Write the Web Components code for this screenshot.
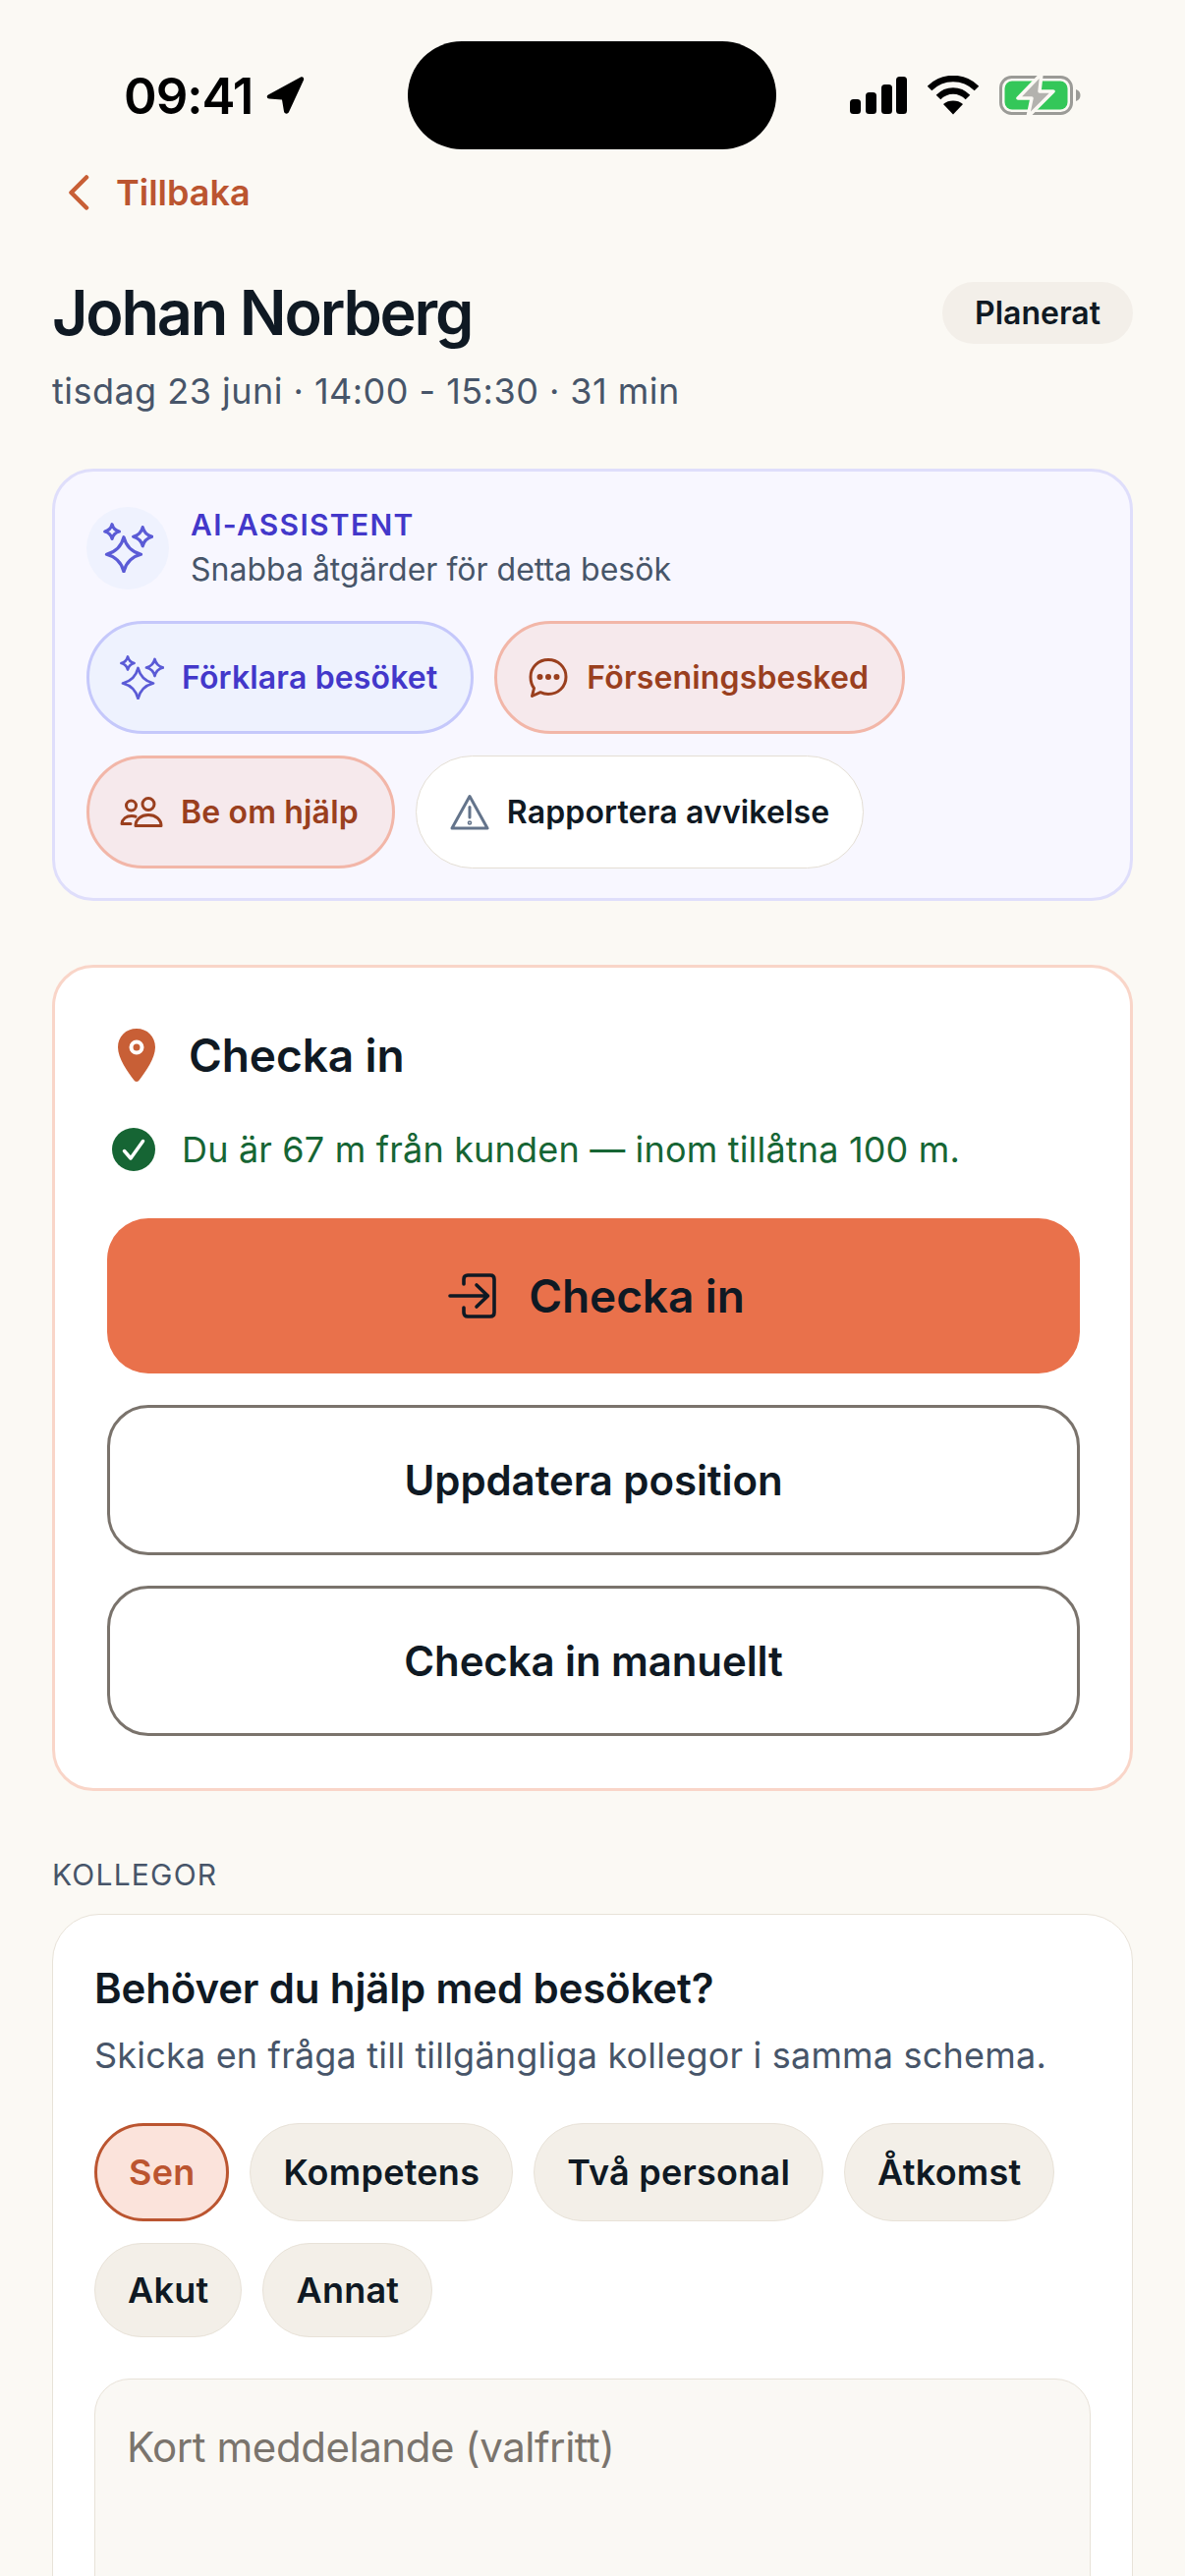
<!DOCTYPE html>
<html lang="sv"><head><meta charset="utf-8"><title>Besök</title>
<style>
html,body{margin:0;padding:0;background:#fbf9f4;font-family:Inter,"Noto Sans",sans-serif;color:#0f1923;-webkit-font-smoothing:antialiased}
body{height:2622px;overflow:hidden}
</style></head><body>
<visit-page>
  <status-bar></status-bar>
  <back-link>Tillbaka</back-link>
  <visit-header name="Johan Norberg" status="Planerat">tisdag 23 juni · 14:00 - 15:30 · 31 min</visit-header>
  <ai-card>
    <action-pill kind="ai" icon="spark">Förklara besöket</action-pill>
    <action-pill kind="warm" icon="chat">Förseningsbesked</action-pill>
    <action-pill kind="warm" icon="people">Be om hjälp</action-pill>
    <action-pill kind="plain" icon="warn">Rapportera avvikelse</action-pill>
  </ai-card>
  <checkin-card>
    <big-button kind="primary" icon="login">Checka in</big-button>
    <big-button>Uppdatera position</big-button>
    <big-button>Checka in manuellt</big-button>
  </checkin-card>
  <colleague-section>
    <reason-chip selected>Sen</reason-chip>
    <reason-chip>Kompetens</reason-chip>
    <reason-chip>Två personal</reason-chip>
    <reason-chip>Åtkomst</reason-chip>
    <reason-chip>Akut</reason-chip>
    <reason-chip>Annat</reason-chip>
  </colleague-section>
</visit-page>
<script>
function star(cx,cy,r){const k=.2*r;return `M${cx} ${cy-r}Q${cx+k} ${cy-k} ${cx+r} ${cy}Q${cx+k} ${cy+k} ${cx} ${cy+r}Q${cx-k} ${cy+k} ${cx-r} ${cy}Q${cx-k} ${cy-k} ${cx} ${cy-r}Z`}
const sparkPath=star(18.5,28.5,15.5)+star(8,8,6.5)+star(35.5,12.5,8.5);
const ICONS={
 spark:`<svg width="45" height="45" viewBox="0 0 45 45" fill="none" stroke="#5b5bd6" stroke-width="2.8" stroke-linejoin="round"><path d="${sparkPath}"/></svg>`,
 chat:`<svg width="42" height="42" viewBox="0 0 42 42" fill="none" stroke="currentColor" stroke-width="3" stroke-linejoin="round" stroke-linecap="round"><path d="M21 2.500C31 2.500 39 10 39 20S31 37.500 21 37.500c-3 0-5.500-.6-8-1.800L4.500 39.500l2-8C4.200 28.500 3 24.500 3 20 3 10 11 2.500 21 2.500Z"/><circle cx="12.500" cy="20" r="1.500" fill="currentColor"/><circle cx="21" cy="20" r="1.500" fill="currentColor"/><circle cx="29.500" cy="20" r="1.500" fill="currentColor"/></svg>`,
 people:`<svg width="44" height="31" viewBox="0 0 44 31" fill="none" stroke="currentColor" stroke-width="3" stroke-linecap="round" stroke-linejoin="round"><circle cx="11.500" cy="9" r="5"/><circle cx="29" cy="7.500" r="6"/><path d="M16 29.500H42C42 23 36.500 18.500 29 18.500S16 23 16 29.500Z"/><path d="M2 27.500C2.500 22.500 6.500 19.500 12 19.500c1.500 0 3 .2 4 .7M2 27.500H11"/></svg>`,
 warn:`<svg width="40" height="38" viewBox="0 0 40 38" fill="none" stroke="#64748b" stroke-width="3" stroke-linejoin="round" stroke-linecap="round"><path d="M20 2.500 38 35H2Z"/><path d="M20 13.500V24"/><circle cx="20" cy="29.500" r=".8"/></svg>`,
 login:`<svg width="49" height="46" viewBox="0 0 49 46" fill="none" stroke="currentColor" stroke-width="3.600" stroke-linecap="round" stroke-linejoin="round"><path d="M16 11V6Q16 2 20 2H43Q47 2 47 6V40Q47 44 43 44H20Q16 44 16 40V35"/><path d="M2 23H40M29 12 40.500 23 29 34"/></svg>`
};

function define(name,css,html,extra){
  const t=document.createElement('template');
  t.innerHTML=`<style>${css}</style>${html}`;
  customElements.define(name,class extends HTMLElement{
    constructor(){super();this.attachShadow({mode:'open'}).appendChild(t.content.cloneNode(true));}
    connectedCallback(){ if(extra) extra(this,this.shadowRoot); }
  });
}

define('visit-page',`:host{display:block;padding:0 53px}`,`<slot></slot>`);

define('status-bar',`
:host{display:grid;grid-template-columns:415px 375px 1fr;margin:0 -53px;padding-top:42px;height:110px;align-items:center;color:#000}
.l{display:flex;align-items:center;gap:14px;font-size:51px;font-weight:600;line-height:1;letter-spacing:-1px;padding-left:126px}
.island{height:110px;background:#000;border-radius:55px;grid-column:2}
.r{display:flex;align-items:center;padding-left:75px;gap:21px}
`,`<div class="l"><span>09:41</span><svg width="40" height="40" viewBox="0 0 40 40"><path d="M2 19.500 35 1.500C37 .5 39 2.500 38 4.500L23 37C21.800 39.500 18.500 39 18 36.500L16 24.500 3 23.500C.5 23.200 0 20.700 2 19.500Z" fill="#000"/></svg></div>
<div class="island"></div>
<div class="r">
<svg width="58" height="38" viewBox="0 0 58 38" fill="#000"><rect x="0" y="23" width="11" height="15" rx="3.500"/><rect x="16" y="16" width="11" height="22" rx="3.500"/><rect x="32" y="8" width="11" height="30" rx="3.500"/><rect x="47" y="0" width="11" height="38" rx="3.500"/></svg>
<svg width="52" height="40" viewBox="0 0 52 40"><path d="M2 13C8 7 16 3 26 3s18 4 24 10" fill="none" stroke="#000" stroke-width="6.500" stroke-linecap="butt"/><path d="M11 22c4-4 9-6.500 15-6.500S37 18 41 22" fill="none" stroke="#000" stroke-width="6.500"/><path d="M16 29c3-2.500 6-3.500 10-3.500s7 1 10 3.500L26 39.500Z" fill="#000"/></svg>
<svg width="84" height="44" viewBox="0 0 84 44"><rect x="1.500" y="3.500" width="72" height="37" rx="11" fill="none" stroke="#9b9b97" stroke-width="3"/><path d="M78 16c3 1 4.500 3 4.500 6s-1.500 5-4.500 6Z" fill="#9b9b97"/><rect x="5.500" y="7.500" width="64" height="29" rx="7.500" fill="#34c759"/><path d="M43 0 19 25H33L29 44 55 18H41Z" fill="#b3b2ae" stroke="#fbf9f4" stroke-width="3.500" stroke-linejoin="round"/></svg>
</div>`);

define('back-link',`
:host{display:flex;align-items:center;gap:27px;margin:22px 0 0 16px;height:44px;color:#bb5530;font-size:36px;font-weight:600;line-height:44px}
svg{flex:none}
`,`<svg width="22" height="36" viewBox="0 0 22 36" fill="none" stroke="#c85f36" stroke-width="4.500" stroke-linecap="round" stroke-linejoin="round"><path d="M19 2.500 3.500 18 19 33.500"/></svg><slot></slot>`);

define('visit-header',`
:host{display:block;margin-top:64px}
.top{display:flex;justify-content:space-between;align-items:center}
h1{margin:0;font-size:63px;font-weight:600;line-height:72px;letter-spacing:-2.200px;color:#0f1923}
.badge{display:flex;align-items:center;height:63px;padding:0 33px;border-radius:32px;background:#f3efe9;font-size:32px;font-weight:600;color:#0f1923}
.sub{margin-top:22px;font-size:36px;line-height:44px;letter-spacing:.47px;color:#475569}
`,`<div class="top"><h1 id="n"></h1><div class="badge" id="s"></div></div><div class="sub"><slot></slot></div>`,
(h,s)=>{s.getElementById('n').textContent=h.getAttribute('name');s.getElementById('s').textContent=h.getAttribute('status');});

define('ai-card',`
:host{display:block;margin-top:57px;border:3px solid #dfdefb;border-radius:42px;background:#f8f7ff;padding:35px 30px 30px 32px}
.head{display:flex;align-items:center;gap:22px}
.ic{width:84px;height:84px;border-radius:50%;background:#eff2fe;display:flex;align-items:center;justify-content:center}
.t{font-size:30px;font-weight:600;line-height:38px;letter-spacing:1.300px;color:#4338ca}
.d{font-size:32px;line-height:40px;color:#475569;margin-top:7px}
.acts{display:flex;flex-wrap:wrap;gap:22px 21px;margin-top:32px}
`,`<div class="head"><div class="ic"><svg width="51" height="51" viewBox="0 0 45 45" fill="none" stroke="#5b5bd6" stroke-width="2.800" stroke-linejoin="round"><path d="${sparkPath}"/></svg></div><div><div class="t">AI-ASSISTENT</div><div class="d">Snabba åtgärder för detta besök</div></div></div><div class="acts"><slot></slot></div>`);

define('action-pill',`
:host{display:inline-flex;align-items:center;height:115px;box-sizing:border-box;border-radius:58px;padding:0 34px 0 31px;gap:18px;font-size:32px;font-weight:600;letter-spacing:.15px}
:host([kind=ai]){background:#eef2fe;border:3px solid #c5c8fb;color:#4338ca}
:host([kind=warm]){background:#f6e9ec;border:3px solid #f2b6a8;color:#9a3f1e}
:host([kind=plain]){background:#fff;border:1.500px solid #e4ded4;color:#0f1923;padding-left:34px}
#i{display:flex}
`,`<span id="i"></span><slot></slot>`,(h,s)=>{s.getElementById('i').innerHTML=ICONS[h.getAttribute('icon')]||'';});

define('checkin-card',`
:host{display:block;margin-top:65px;border:3px solid #f9d5c8;border-radius:42px;background:#fff;padding:59px 51px 53px 53px}
.h{display:flex;align-items:center;gap:34px;padding-left:11px;font-size:46px;font-weight:600;line-height:60px;letter-spacing:-.1px;color:#0f1923}
.g{display:flex;align-items:center;gap:27px;margin-top:41px;padding-left:5px;font-size:36px;line-height:50px;letter-spacing:.18px;color:#166534}
.b{display:flex;flex-direction:column;gap:32px;margin-top:45px}
svg{flex:none}
::slotted(big-button:nth-of-type(3)){margin-top:-1px}
`,`<div class="h"><svg width="38" height="54" viewBox="0 0 38 54"><path fill-rule="evenodd" fill="#c85f36" d="M19 0C30 0 38 8 38 19 38 30 28 44 22 52 20.500 54.500 17.500 54.500 16 52 10 44 0 30 0 19 0 8 8 0 19 0ZM19 11.500A7.500 7.500 0 1 0 19 26.500 7.500 7.500 0 1 0 19 11.500ZM19 15.500A3.500 3.500 0 1 1 19 22.500 3.500 3.500 0 1 1 19 15.500Z"/></svg><span>Checka in</span></div>
<div class="g"><svg width="44" height="44" viewBox="0 0 44 44"><circle cx="22" cy="22" r="22" fill="#166534"/><path d="M12.500 23.500 19 31 31.500 13.500" fill="none" stroke="#fff" stroke-width="3.500" stroke-linecap="round" stroke-linejoin="round"/></svg><span>Du är 67 m från kunden — inom tillåtna 100 m.</span></div>
<div class="b"><slot></slot></div>`);

define('big-button',`
:host{display:flex;align-items:center;justify-content:center;gap:33px;box-sizing:border-box;height:153px;border:3px solid #7a736c;border-radius:42px;background:#fff;font-size:42px;font-weight:600;letter-spacing:-.1px;color:#0f1923}
:host([kind=primary]){height:158px;background:#e9714b;border:none;font-size:46px;padding-left:6px}
#i{display:flex}
#i:empty{display:none}
`,`<span id="i"></span><slot></slot>`,(h,s)=>{s.getElementById('i').innerHTML=ICONS[h.getAttribute('icon')]||'';});

define('colleague-section',`
:host{display:block;margin-top:66px}
.l{font-size:30px;line-height:38px;letter-spacing:1.200px;color:#475569}
.c{margin-top:21px;border:1.500px solid #e8e2d8;border-radius:48px;background:#fff;padding:50px 42px 0;height:900px}
h2{margin:0;font-size:42px;font-weight:600;line-height:50px;letter-spacing:-.15px;color:#0f1923}
p{margin:17px 0 0;font-size:36px;line-height:52px;letter-spacing:.2px;color:#475569}
.chips{display:flex;flex-wrap:wrap;gap:22px 21px;margin-top:43px}
.ta{margin-top:42px;height:300px;box-sizing:border-box;border:1.500px solid #e8e2d8;border-radius:36px;background:#faf8f4;padding:44px 32px;font-size:42px;line-height:50px;letter-spacing:-.45px;color:#7a746d}
`,`<div class="l">KOLLEGOR</div><div class="c"><h2>Behöver du hjälp med besöket?</h2><p>Skicka en fråga till tillgängliga kollegor i samma schema.</p><div class="chips"><slot></slot></div><div class="ta">Kort meddelande (valfritt)</div></div>`);

define('reason-chip',`
:host{display:flex;align-items:center;box-sizing:border-box;min-height:96px;padding:0 33px;border:1.500px solid #e8e2d8;border-radius:50px;background:#f3efe8;font-size:36px;font-weight:600;letter-spacing:.25px;color:#0f1923}
:host([selected]){height:100px;border:3px solid #bb5530;background:#fbe3db;color:#bb5530;padding:0 32px}
`,`<slot></slot>`);
</script>
</body></html>
